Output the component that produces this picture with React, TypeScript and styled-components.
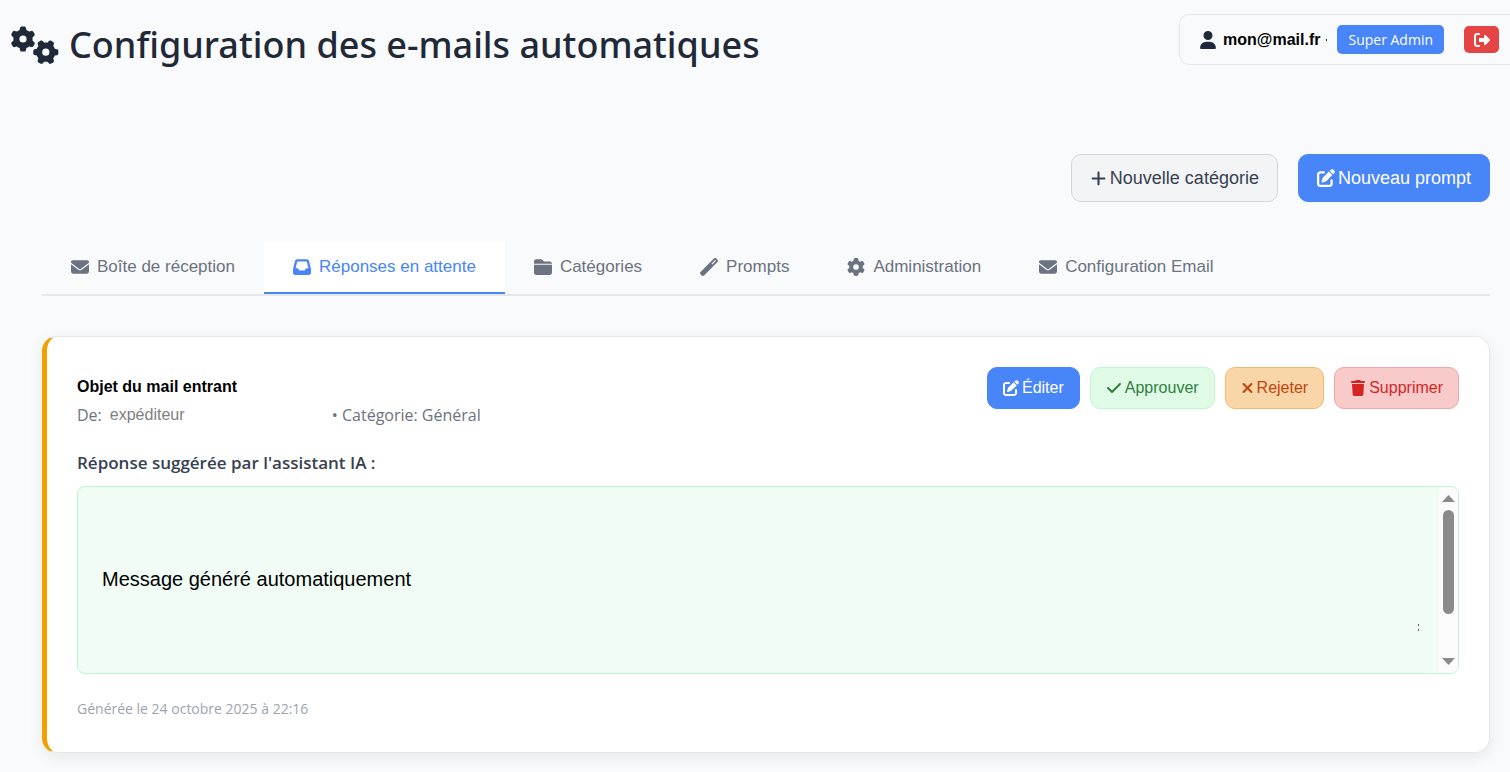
import React from 'react';
import styled, { createGlobalStyle } from 'styled-components';
import {
  FaGears, FaUser, FaRightFromBracket, FaPlus, FaPenToSquare, FaEnvelope, FaInbox,
  FaFolderClosed, FaWandMagic, FaGear, FaCheck, FaXmark, FaTrash,
} from 'react-icons/fa6';

const arial = `'Liberation Sans', Arial, sans-serif`;
const humanist = `'Segoe UI', 'Open Sans', sans-serif`;

const GlobalStyle = createGlobalStyle`
  *, *::before, *::after { box-sizing: border-box; }
  body { margin: 0; background: #f9fafc; color: #1f2937; font-family: ${humanist}; }
  button { font: inherit; cursor: pointer; }
  svg { flex: none; display: block; }
`;

const Page = styled.div`
  overflow-x: hidden;
`;

const Header = styled.header`
  display: flex;
  justify-content: space-between;
  align-items: flex-start;
  padding: 14px 0 0 11px;
`;

const Title = styled.h1`
  display: flex;
  align-items: center;
  gap: 10px;
  margin: 0;
  padding-top: 4px;
  font-family: 'Segoe UI', 'Noto Sans', sans-serif;
  font-size: 36px;
  line-height: 54px;
  font-weight: 500;
  white-space: nowrap;
`;

const Account = styled.div`
  display: flex;
  align-items: center;
  height: 51px;
  padding: 0 11px 0 19px;
  border: 1px solid #e5e7eb;
  border-right: 0;
  border-radius: 10px 0 0 10px;
`;

const AccountName = styled.span`
  margin: 0 6px;
  font-family: ${arial};
  font-size: 16px;
  font-weight: 700;
  color: #000;
`;

const Separator = styled.span`
  width: 1px;
  height: 2px;
  margin-right: 10px;
  background: #1f2937;
`;

const Role = styled.span`
  padding: 0 11px;
  border-radius: 5px;
  background: #4785f9;
  color: #fff;
  font-size: 14px;
  line-height: 29px;
`;

const Logout = styled.button`
  display: grid;
  place-items: center;
  width: 35px;
  height: 27px;
  margin-left: 20px;
  padding: 0;
  border: 0;
  border-radius: 5px;
  background: #e54444;
  color: #fff;
`;

const Main = styled.main`
  padding: 82px 20px 20px 42px;
`;

const Toolbar = styled.div`
  display: flex;
  justify-content: flex-end;
  gap: 20px;
`;

type Tone = 'primary' | 'neutral' | 'success' | 'warning' | 'danger';
const tones: Record<Tone, [string, string, string]> = {
  primary: ['#4785f9', '#4785f9', '#ffffff'],
  neutral: ['#f3f4f6', '#d1d5db', '#374151'],
  success: ['#dffbe6', '#c0f4cf', '#2f8040'],
  warning: ['#f9d6a8', '#f5b871', '#bf4510'],
  danger: ['#f8caca', '#f3a4a6', '#d42525'],
};

const Button = styled.button<{ $tone: Tone; $large?: boolean }>`
  display: flex;
  align-items: center;
  gap: 3px;
  height: ${p => (p.$large ? 48 : 42)}px;
  padding: 0 ${p => (p.$large ? 18 : 15)}px;
  border: 1px solid ${p => tones[p.$tone][1]};
  border-radius: 10px;
  background: ${p => tones[p.$tone][0]};
  color: ${p => tones[p.$tone][2]};
  font-family: ${arial};
  font-size: ${p => (p.$large ? 18 : 16)}px;
  white-space: nowrap;
`;

const CrossIcon = styled(FaXmark)`
  width: 13px;
  height: 16px;
`;

const Tabs = styled.nav`
  display: flex;
  margin-top: 39px;
  border-bottom: 2px solid #e5e7eb;
`;

const Tab = styled.button<{ $active?: boolean }>`
  display: flex;
  align-items: center;
  gap: 8px;
  height: 53px;
  padding: 0 29px;
  border: 0;
  border-bottom: 2px solid ${p => (p.$active ? '#4785f9' : 'transparent')};
  background: ${p => (p.$active ? '#ffffff' : 'transparent')};
  color: ${p => (p.$active ? '#4785f9' : '#6b7280')};
  font-family: ${arial};
  font-size: 17px;
  white-space: nowrap;
`;

const Card = styled.article`
  margin-top: 40px;
  padding: 30px 30px 31px;
  border: 1px solid #e5e7eb;
  border-left: 5px solid #f0a000;
  border-radius: 15px;
  background: #fff;
  box-shadow: 0 4px 15px rgba(0, 0, 0, 0.08);
`;

const CardHead = styled.div`
  display: flex;
  justify-content: space-between;
  align-items: flex-start;
`;

const Subject = styled.h2`
  margin: 8px 0 0;
  font-family: ${arial};
  font-size: 16px;
  line-height: 24px;
  font-weight: 700;
  color: #000;
`;

const Meta = styled.div`
  display: flex;
  gap: 8px;
  margin-top: 3px;
  font-size: 16px;
  line-height: 26px;
  color: #6b7280;
`;

const Sender = styled.span`
  width: 214px;
  font-family: ${arial};
  color: #808080;
`;

const Actions = styled.div`
  display: flex;
  gap: 10px;
`;

const ReplyTitle = styled.h3`
  margin: 22px 0 10px;
  font-size: 17px;
  line-height: 26px;
  font-weight: 600;
  color: #374151;
`;

const Reply = styled.div`
  display: flex;
  height: 188px;
  border: 1px solid #bbf7d0;
  border-radius: 8px;
  background: #f1fcf4;
  overflow: hidden;
`;

const Message = styled.p`
  flex: 1;
  margin: 0;
  padding: 0 24px 2px;
  align-self: center;
  font-family: ${arial};
  font-size: 20px;
  line-height: 24px;
  color: #000;
`;

const Remnant = styled.span`
  display: flex;
  flex-direction: column;
  gap: 3px;
  align-self: flex-end;
  width: 1px;
  margin: 0 20px 42px 0;
  &::before, &::after { content: ''; height: 2px; background: #666; }
`;

const Scroller = styled.div`
  display: flex;
  flex-direction: column;
  align-items: center;
  width: 19px;
  padding: 8px 0;
  background: #fcfcfc;
`;

const Thumb = styled.div`
  width: 11px;
  height: 104px;
  margin: 8px 0 auto;
  border-radius: 6px;
  background: #8b8b8b;
`;

const Generated = styled.p`
  margin: 23px 0 0;
  font-size: 14px;
  line-height: 24px;
  color: #9ca3af;
`;

const tabs = [
  { label: 'Boîte de réception', Icon: FaEnvelope },
  { label: 'Réponses en attente', Icon: FaInbox, active: true },
  { label: 'Catégories', Icon: FaFolderClosed },
  { label: 'Prompts', Icon: FaWandMagic },
  { label: 'Administration', Icon: FaGear },
  { label: 'Configuration Email', Icon: FaEnvelope },
];

export default function App() {
  return (
    <Page>
      <GlobalStyle />
      <Header>
        <Title><FaGears size={48} />Configuration des e-mails automatiques</Title>
        <Account>
          <FaUser size={18} />
          <AccountName>mon@mail.fr</AccountName>
          <Separator />
          <Role>Super Admin</Role>
          <Logout aria-label="Se déconnecter"><FaRightFromBracket size={16} /></Logout>
        </Account>
      </Header>
      <Main>
        <Toolbar>
          <Button $tone="neutral" $large><FaPlus size={17} />Nouvelle catégorie</Button>
          <Button $tone="primary" $large><FaPenToSquare size={18} />Nouveau prompt</Button>
        </Toolbar>
        <Tabs>
          {tabs.map(({ label, Icon, active }) => (
            <Tab key={label} $active={active} aria-current={active ? 'page' : undefined}>
              <Icon size={18} />{label}
            </Tab>
          ))}
        </Tabs>
        <Card>
          <CardHead>
            <div>
              <Subject>Objet du mail entrant</Subject>
              <Meta><span>De:</span><Sender>expéditeur</Sender><span>• Catégorie: Général</span></Meta>
            </div>
            <Actions>
              <Button $tone="primary"><FaPenToSquare size={16} />Éditer</Button>
              <Button $tone="success"><FaCheck size={16} />Approuver</Button>
              <Button $tone="warning"><CrossIcon />Rejeter</Button>
              <Button $tone="danger"><FaTrash size={16} />Supprimer</Button>
            </Actions>
          </CardHead>
          <ReplyTitle>Réponse suggérée par l'assistant IA :</ReplyTitle>
          <Reply>
            <Message>Message généré automatiquement</Message>
            <Remnant aria-hidden />
            <Scroller aria-hidden>
              <svg width="13" height="7" viewBox="0 0 13 7"><path d="M6.5 0 13 7H0z" fill="#8b8b8b" /></svg>
              <Thumb />
              <svg width="13" height="7" viewBox="0 0 13 7"><path d="M0 0h13L6.5 7z" fill="#8b8b8b" /></svg>
            </Scroller>
          </Reply>
          <Generated>Générée le 24 octobre 2025 à 22:16</Generated>
        </Card>
      </Main>
    </Page>
  );
}
